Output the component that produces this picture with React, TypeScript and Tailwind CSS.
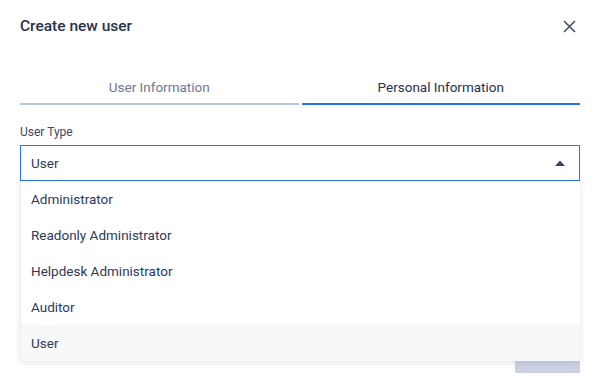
import { useState } from 'react';

const options = ['Administrator', 'Readonly Administrator', 'Helpdesk Administrator', 'Auditor', 'User'];

export default function App() {
  const [selected, setSelected] = useState('User');
  const [tab, setTab] = useState(1);

  return (
    <div className="w-[600px] h-[390px] bg-white overflow-hidden font-['Roboto',sans-serif] text-[#27334d]">
      <div className="pl-5 pr-5">
        {/* Header */}
        <div className="flex items-center justify-between h-[52px] pt-[1px]">
          <h1 className="text-[15.5px] font-medium text-[#26324b]">Create new user</h1>
          <button className="mr-[4px] text-[#3d4a66]">
            <svg width="13" height="13" viewBox="0 0 13 13" fill="none" stroke="currentColor" strokeWidth="1.5">
              <path d="M1 1L12 12M12 1L1 12" />
            </svg>
          </button>
        </div>

        {/* Tabs */}
        <div className="flex gap-[3px] mt-[21px]">
          <button
            onClick={() => setTab(0)}
            className={`flex-1 h-[32px] pb-[1px] text-[13.5px] border-b-2 ${tab === 0 ? 'border-[#2673f0] text-[#26324b]' : 'border-[#b8c3dc] text-[#6b7896]'}`}
          >
            User Information
          </button>
          <button
            onClick={() => setTab(1)}
            className={`flex-1 h-[32px] pb-[1px] text-[13.5px] border-b-2 ${tab === 1 ? 'border-[#2673f0] text-[#26324b]' : 'border-[#b8c3dc] text-[#6b7896]'}`}
          >
            Personal Information
          </button>
        </div>

        {/* User Type */}
        <div className="mt-[19px] text-xs text-[#3b4660]">User Type</div>
        <div className="relative mt-[5px]">
          <div className="h-9 border border-[#2673f0] flex items-center justify-between pl-[10px] pr-[14px] text-[13.5px] text-[#2d3a57]">
            <span>{selected}</span>
            <svg width="10" height="6" viewBox="0 0 10 6" className="text-[#3a4560]">
              <path d="M0 6L5 0.5L10 6Z" fill="currentColor" />
            </svg>
          </div>
          <ul className="absolute left-0 right-0 top-full bg-white border-l border-[#eceef3] shadow-[0_2px_6px_rgba(40,50,80,0.12)] z-10">
            {options.map((o) => (
              <li
                key={o}
                onClick={() => setSelected(o)}
                className={`h-9 flex items-center pl-[10px] text-[13.5px] text-[#2d3a57] ${o === selected ? 'bg-[#f7f8fa]' : 'bg-white'}`}
              >
                {o}
              </li>
            ))}
          </ul>
        </div>

        {/* Footer */}
        <div className="flex justify-end mt-[156px]">
          <button className="w-[65px] h-9 bg-[#cdd2e2] text-white text-sm">Save</button>
        </div>
      </div>
    </div>
  );
}
